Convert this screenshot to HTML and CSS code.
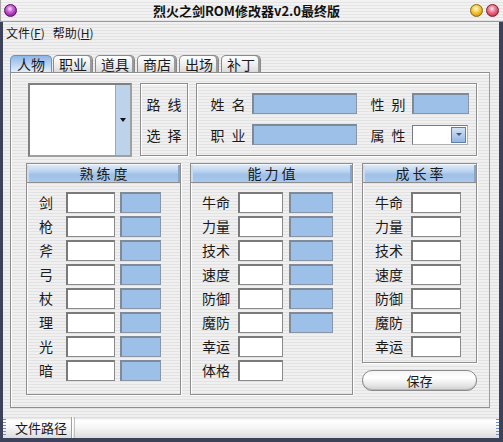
FILE: index.html
```html
<!DOCTYPE html>
<html>
<head>
<meta charset="utf-8">
<link rel="stylesheet" href="styles.css">
</head>
<body>
<div class="window">
  <div class="titlebar">
    <span class="orb orb-purple"></span>
    <div class="title">烈火之剑ROM修改器v2.0最终版</div>
    <span class="orb orb-yellow"></span>
    <span class="orb orb-red"></span>
  </div>
  <div class="frame">
    <div class="menubar"><span class="menu">文件(<u>F</u>)</span><span class="menu">帮助(<u>H</u>)</span></div>
    <div class="tabs">
      <div class="tab active">人物</div>
      <div class="tab">职业</div>
      <div class="tab">道具</div>
      <div class="tab">商店</div>
      <div class="tab">出场</div>
      <div class="tab">补丁</div>
    </div>
    <div class="panel">
      <div class="toprow">
        <div class="listbox">
          <div class="list-body"></div>
          <div class="list-btn"><span class="tri"></span></div>
        </div>
        <div class="routebox">
          <div class="lbl">路 线</div>
          <div class="lbl">选 择</div>
        </div>
        <div class="infobox">
          <div class="inforow">
            <div class="ilbl">姓 名</div>
            <div class="field blue wide"></div>
            <div class="ilbl2">性 别</div>
            <div class="field blue narrow"></div>
          </div>
          <div class="inforow">
            <div class="ilbl">职 业</div>
            <div class="field blue wide"></div>
            <div class="ilbl2">属 性</div>
            <div class="combo"><span class="combo-btn"><span class="tri small"></span></span></div>
          </div>
        </div>
      </div>
      <div class="bottomrow">
        <div class="group g1">
          <div class="ghead">熟练度</div>
          <div class="gbody">
            <div class="row"><span class="rl">剑</span><span class="field white"></span><span class="field blue"></span></div>
            <div class="row"><span class="rl">枪</span><span class="field white"></span><span class="field blue"></span></div>
            <div class="row"><span class="rl">斧</span><span class="field white"></span><span class="field blue"></span></div>
            <div class="row"><span class="rl">弓</span><span class="field white"></span><span class="field blue"></span></div>
            <div class="row"><span class="rl">杖</span><span class="field white"></span><span class="field blue"></span></div>
            <div class="row"><span class="rl">理</span><span class="field white"></span><span class="field blue"></span></div>
            <div class="row"><span class="rl">光</span><span class="field white"></span><span class="field blue"></span></div>
            <div class="row"><span class="rl">暗</span><span class="field white"></span><span class="field blue"></span></div>
          </div>
        </div>
        <div class="group g2">
          <div class="ghead">能力值</div>
          <div class="gbody">
            <div class="row"><span class="rl">牛命</span><span class="field white"></span><span class="field blue"></span></div>
            <div class="row"><span class="rl">力量</span><span class="field white"></span><span class="field blue"></span></div>
            <div class="row"><span class="rl">技术</span><span class="field white"></span><span class="field blue"></span></div>
            <div class="row"><span class="rl">速度</span><span class="field white"></span><span class="field blue"></span></div>
            <div class="row"><span class="rl">防御</span><span class="field white"></span><span class="field blue"></span></div>
            <div class="row"><span class="rl">魔防</span><span class="field white"></span><span class="field blue"></span></div>
            <div class="row"><span class="rl">幸运</span><span class="field white"></span></div>
            <div class="row"><span class="rl">体格</span><span class="field white"></span></div>
          </div>
        </div>
        <div class="rightcol">
          <div class="group g3">
            <div class="ghead">成长率</div>
            <div class="gbody">
              <div class="row"><span class="rl">牛命</span><span class="field white"></span></div>
              <div class="row"><span class="rl">力量</span><span class="field white"></span></div>
              <div class="row"><span class="rl">技术</span><span class="field white"></span></div>
              <div class="row"><span class="rl">速度</span><span class="field white"></span></div>
              <div class="row"><span class="rl">防御</span><span class="field white"></span></div>
              <div class="row"><span class="rl">魔防</span><span class="field white"></span></div>
              <div class="row"><span class="rl">幸运</span><span class="field white"></span></div>
            </div>
          </div>
          <div class="savebtn">保存</div>
        </div>
      </div>
    </div>
    <div class="statusbar">
      <span class="grip"></span>
      <div class="spanel first">文件路径</div>
      <div class="spanel rest"></div>
      <span class="grip"></span>
    </div>
  </div>
</div>
</body>
</html>
```
FILE: styles.css
```css
* { box-sizing: border-box; }
body { margin: 0; background: #3b4259; }
.window {
  width: 503px; height: 442px;
  background: #3b4259;
  display: flex; flex-direction: column;
  font-family: "Noto Sans CJK SC", "Liberation Sans", sans-serif;
  color: #1a1a1a;
  overflow: hidden;
}
.titlebar {
  height: 22px; flex: none;
  display: flex; align-items: center;
  padding: 0 4px 0 3px;
  background: repeating-linear-gradient(to bottom, #f2f2f2 0 2px, #e4e4e4 2px 3px);
  border-bottom: 1px solid #9a9a9a;
  border-left: 1px solid #a8a8a8;
}
.orb { width: 13px; height: 13px; border-radius: 50%; flex: none; display: block; }
.orb-purple { background: radial-gradient(circle at 45% 35%, #fbe0fc 0, #d070da 30%, #a22db0 65%, #5e0f66 100%); border: 1px solid #5a1062; }
.orb-yellow { background: radial-gradient(circle at 45% 35%, #fffbe0 0, #f8d860 30%, #e8a818 65%, #9a6a08 100%); border: 1px solid #8a6a10; margin-right: 3px; }
.orb-red { background: radial-gradient(circle at 45% 35%, #ffe8ee 0, #f08aa0 30%, #d84860 65%, #8a1a2a 100%); border: 1px solid #7a2030; }
.title {
  flex: 1; text-align: center;
  font-size: 13px; font-weight: bold; color: #111;
  padding-left: 6px;
}
.frame {
  flex: 1;
  margin: 0 4px 4px 3px;
  display: flex; flex-direction: column;
  background: repeating-linear-gradient(to bottom, #f0f0f0 0 2px, #e2e2e2 2px 3px);
}
.menubar {
  height: 18px; flex: none;
  display: flex; align-items: center; gap: 8px;
  padding-left: 3px; padding-top: 2px;
  font-size: 12px;
}
.menu u { text-decoration: underline; }
.tabs {
  margin-top: 15px; margin-left: 7px;
  height: 17px; flex: none;
  display: flex; gap: 2px;
}
.tab {
  width: 40px; height: 17px;
  border: 1px solid #8a8a8a; border-bottom: none;
  border-radius: 5px 5px 0 0;
  background: linear-gradient(to bottom, #ffffff, #ececec 60%, #dadada);
  box-shadow: inset -2px 0 0 #9a9a9a;
  font-size: 14px; line-height: 16px; text-align: center;
}
.tab.active {
  width: 42px; margin-right: -1px;
  border-color: #6f8fb8;
  background: linear-gradient(to bottom, #8fb6e6, #b9d2ef 50%, #e4eefa);
  box-shadow: none;
}
.panel {
  margin-left: 7px;
  width: 480px; height: 336px; flex: none;
  border: 1px solid #8e8e8e;
  border-right-color: #9c9c9c;
  box-shadow: inset 1px 1px 0 #ffffff;
}
.toprow {
  display: flex; gap: 8px;
  margin-top: 10px; margin-left: 17px;
}
.listbox {
  width: 104px; height: 74px;
  border: 2px solid #808080;
  border-right-color: #a0a0a0; border-bottom-color: #a0a0a0;
  display: flex; background: #fff;
}
.list-body { flex: 1; background: #fff; }
.list-btn {
  width: 15px;
  background: #bdd3ec;
  border-left: 1px solid #9aa8b8;
  display: flex; align-items: center; justify-content: center;
}
.tri {
  width: 0; height: 0;
  border-left: 3px solid transparent; border-right: 3px solid transparent;
  border-top: 4px solid #111;
  display: block;
}
.tri.small { border-top-color: #3a5a8a; border-top-width: 3px; }
.routebox {
  width: 48px; height: 73px;
  border: 1px solid #8e8e8e;
  box-shadow: inset 1px 1px 0 #fff, 1px 1px 0 #fff;
  display: flex; flex-direction: column; justify-content: space-around;
  align-items: center;
  padding: 4px 0;
}
.lbl, .ilbl, .ilbl2, .rl { font-size: 14px; line-height: 20px; }
.lbl, .ilbl, .ilbl2 { word-spacing: 4px; }
.infobox {
  width: 281px; height: 73px;
  border: 1px solid #8e8e8e;
  box-shadow: inset 1px 1px 0 #fff, 1px 1px 0 #fff;
  padding: 9px 0 0 12px;
  display: flex; flex-direction: column; gap: 10px;
}
.inforow { display: flex; align-items: center; height: 21px; }
.ilbl { width: 38px; margin-right: 5px; text-align: center; white-space: nowrap; }
.ilbl2 { width: 48px; margin-left: 7px; text-align: center; white-space: nowrap; }
.field {
  display: block; height: 21px;
  border: 1px solid #8a8a8a;
  border-top: 2px solid #7a7a7a; border-left: 2px solid #7a7a7a;
}
.field.blue { background: #9dc0e9; border-color: #8a96a6; border-top-color: #7f8a98; border-left-color: #7f8a98; }
.field.white { background: #fff; }
.field.wide { width: 105px; }
.field.narrow { width: 57px; }
.combo {
  width: 56px; height: 20px;
  background: #fff;
  border: 1px solid #7a7a7a;
  border-right-color: #b0b0b0; border-bottom-color: #b0b0b0;
  display: flex; justify-content: flex-end; align-items: center;
  padding-right: 1px;
}
.combo-btn {
  width: 15px; height: 16px;
  background: linear-gradient(to bottom, #d2e2f4, #94b6e0);
  border: 1px solid #5f7fa8;
  display: flex; align-items: center; justify-content: center;
}
.bottomrow {
  display: flex; align-items: flex-start; gap: 9px;
  margin-top: 6px; margin-left: 15px;
}
.group {
  border: 1px solid #8e8e8e;
  box-shadow: inset 1px 1px 0 #fff, 1px 1px 0 #fff;
}
.g1 { width: 155px; height: 232px; }
.g2 { width: 163px; height: 232px; }
.g3 { width: 115px; height: 200px; }
.ghead {
  height: 19px;
  border-bottom: 1px solid #8e8e8e;
  background: linear-gradient(to bottom, #e2edf9 0, #bcd4ef 40%, #9fc0e8 60%, #aac8ea 100%);
  box-shadow: inset 0 1px 0 #f4f8fd, inset -2px 0 0 #88a6cc, inset 2px 0 0 #c9dcf2;
  text-align: center;
  font-size: 14px; line-height: 18px; letter-spacing: 3px;
  padding-left: 3px;
}
.gbody {
  padding-top: 9px;
  display: flex; flex-direction: column; gap: 4px;
}
.row { display: flex; align-items: center; height: 20px; }
.row .field { height: 21px; }
.rl { text-align: center; }
.g1 .gbody { padding-left: 4px; }
.g1 .rl { width: 30px; margin-right: 5px; }
.g1 .field.white { width: 49px; }
.g1 .field.blue { width: 41px; margin-left: 5px; }
.g2 .gbody { padding-left: 7px; }
.g2 .rl { width: 36px; margin-right: 4px; }
.g2 .field.white { width: 45px; }
.g2 .field.blue { width: 44px; margin-left: 6px; }
.g3 .gbody { padding-left: 8px; }
.g3 .rl { width: 36px; margin-right: 4px; }
.g3 .field.white { width: 50px; }
.rightcol { width: 115px; display: flex; flex-direction: column; gap: 7px; }
.savebtn {
  height: 21px;
  border: 1px solid #8a8a8a;
  border-radius: 10px;
  background: linear-gradient(to bottom, #f4f4f4, #ffffff 35%, #e6e6e6 75%, #cfcfcf);
  box-shadow: inset 0 -1px 0 #b8b8b8;
  text-align: center; font-size: 13px; line-height: 19px;
}
.statusbar {
  margin-top: 9px;
  height: 21px; flex: none;
  display: flex; align-items: stretch;
  background: linear-gradient(to bottom, #d6d6d6 0, #ffffff 15%, #f6f6f6 50%, #dcdcdc 100%);
}
.grip {
  width: 3px; flex: none;
  background: repeating-linear-gradient(to bottom, #6e8fc0 0 1px, transparent 1px 3px);
  margin: 2px 0;
}
.spanel { font-size: 13px; line-height: 21px; }
.spanel.first { width: 66px; padding-left: 9px; border-right: 1px solid #a0a0a0; box-shadow: 1px 0 0 #fff; }
.spanel.rest { flex: 1; margin-left: 2px; border-left: 1px solid #c0c0c0; }
```
